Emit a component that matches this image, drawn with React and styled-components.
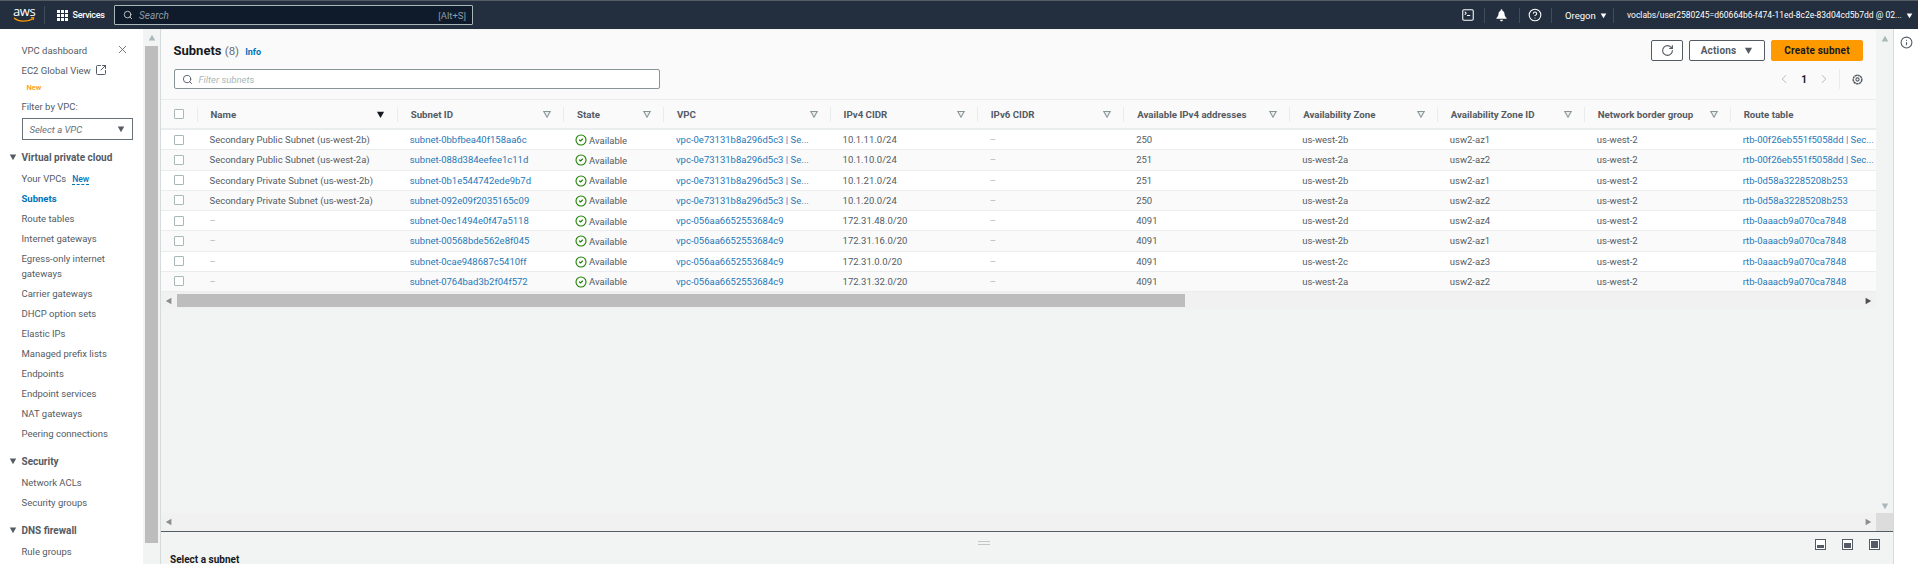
import styled, { createGlobalStyle } from "styled-components";
import {
  Search,
  X,
  SquareArrowOutUpRight,
  SquareTerminal,
  CircleHelp,
  RotateCw,
  ChevronLeft,
  ChevronRight,
  CircleCheck,
  Info,
} from "lucide-react";

const GlobalStyle = createGlobalStyle`
  html, body {
    margin: 0;
    padding: 0;
    height: 100%;
    overflow: hidden;
    background: #ffffff;
    font-family: Roboto, "Liberation Sans", sans-serif;
    font-size: 9.5px;
    color: #545b64;
  }
  #root { height: 100%; }
  * { box-sizing: border-box; }
`;

const COLUMNS = "35.5px 200.2px 166.3px 100px 166.6px 147.2px 146.4px 166px 147.6px 147px 145.9px 146.7px";
const LINK = "#1f78b8";

const subnets = [
  ["Secondary Public Subnet (us-west-2b)", "subnet-0bbfbea40f158aa6c", "vpc-0e73131b8a296d5c3 | Se...", "10.1.11.0/24", "250", "us-west-2b", "usw2-az1", "rtb-00f26eb551f5058dd | Sec..."],
  ["Secondary Public Subnet (us-west-2a)", "subnet-088d384eefee1c11d", "vpc-0e73131b8a296d5c3 | Se...", "10.1.10.0/24", "251", "us-west-2a", "usw2-az2", "rtb-00f26eb551f5058dd | Sec..."],
  ["Secondary Private Subnet (us-west-2b)", "subnet-0b1e544742ede9b7d", "vpc-0e73131b8a296d5c3 | Se...", "10.1.21.0/24", "251", "us-west-2b", "usw2-az1", "rtb-0d58a32285208b253"],
  ["Secondary Private Subnet (us-west-2a)", "subnet-092e09f2035165c09", "vpc-0e73131b8a296d5c3 | Se...", "10.1.20.0/24", "250", "us-west-2a", "usw2-az2", "rtb-0d58a32285208b253"],
  ["–", "subnet-0ec1494e0f47a5118", "vpc-056aa6652553684c9", "172.31.48.0/20", "4091", "us-west-2d", "usw2-az4", "rtb-0aaacb9a070ca7848"],
  ["–", "subnet-00568bde562e8f045", "vpc-056aa6652553684c9", "172.31.16.0/20", "4091", "us-west-2b", "usw2-az1", "rtb-0aaacb9a070ca7848"],
  ["–", "subnet-0cae948687c5410ff", "vpc-056aa6652553684c9", "172.31.0.0/20", "4091", "us-west-2c", "usw2-az3", "rtb-0aaacb9a070ca7848"],
  ["–", "subnet-0764bad3b2f04f572", "vpc-056aa6652553684c9", "172.31.32.0/20", "4091", "us-west-2a", "usw2-az2", "rtb-0aaacb9a070ca7848"],
];

const headers = [
  "Name",
  "Subnet ID",
  "State",
  "VPC",
  "IPv4 CIDR",
  "IPv6 CIDR",
  "Available IPv4 addresses",
  "Availability Zone",
  "Availability Zone ID",
  "Network border group",
  "Route table",
];

const navGroups = [
  {
    title: "Virtual private cloud",
    items: [
      "Your VPCs",
      "Subnets",
      "Route tables",
      "Internet gateways",
      "Egress-only internet gateways",
      "Carrier gateways",
      "DHCP option sets",
      "Elastic IPs",
      "Managed prefix lists",
      "Endpoints",
      "Endpoint services",
      "NAT gateways",
      "Peering connections",
    ],
  },
  { title: "Security", items: ["Network ACLs", "Security groups"] },
  { title: "DNS firewall", items: ["Rule groups"] },
];

const Triangle = ({ size = 9, dir = "down", fill = "#545b64", stroke = "none" }) => {
  const points = {
    down: "1,2 9,2 5,9",
    up: "1,8 9,8 5,1",
    left: "8,1 8,9 1,5",
    right: "2,1 2,9 9,5",
  }[dir];
  return (
    <svg width={size} height={size} viewBox="0 0 10 10">
      <polygon points={points} fill={fill} stroke={stroke} strokeWidth={stroke === "none" ? 0 : 1.3} />
    </svg>
  );
};

const GridIcon = () => (
  <svg width="11" height="11" viewBox="0 0 11 11" fill="#ffffff">
    {[0, 4, 8].map((y) =>
      [0, 4, 8].map((x) => <rect key={`${x}-${y}`} x={x} y={y} width="3" height="3" />)
    )}
  </svg>
);

const BellIcon = () => (
  <svg width="13" height="13" viewBox="0 0 12 12" fill="none">
    <path d="M6 1.6c-1.900 0-2.800 1.400-2.800 3.100 0 1.800-.9 2.800-1.900 3.600v.7h9.400v-.7c-1-.8-1.900-1.800-1.900-3.600C8.800 3 7.900 1.600 6 1.600z" fill="#ffffff" />
    <circle cx="6" cy="1.200" r=".9" fill="#ffffff" />
    <path d="M4.600 10h2.800c0 .8-.6 1.400-1.400 1.400S4.600 10.800 4.600 10z" fill="#ffffff" />
  </svg>
);

const GearIcon = () => (
  <svg width="11" height="11" viewBox="0 0 11 11" fill="none">
    <circle cx="5.5" cy="5.5" r="4.3" stroke="#545b64" strokeWidth="1.500" strokeDasharray="2.400 .4" />
    <circle cx="5.5" cy="5.5" r="1.600" stroke="#545b64" strokeWidth="1.100" />
  </svg>
);

const PanelIcon = ({ mode }) => (
  <svg width="11" height="11" viewBox="0 0 11 11">
    <rect x=".5" y=".5" width="10" height="10" fill="#ffffff" stroke="#545b64" />
    {mode === "low" && <rect x="2" y="6" width="7" height="3" fill="#545b64" />}
    {mode === "mid" && <rect x="2" y="4" width="7" height="5" fill="#545b64" />}
    {mode === "high" && <rect x="2" y="2" width="7" height="7" fill="#545b64" />}
  </svg>
);

const Page = styled.div`
  height: 564px;
  display: flex;
  flex-direction: column;
  overflow: hidden;
`;

const TopBar = styled.header`
  height: 29px;
  flex: none;
  display: flex;
  align-items: center;
  background: #232f3e;
  border-top: 1px solid #545b64;
  color: #ffffff;
`;

const Logo = styled.div`
  width: 44.5px;
  height: 18px;
  padding-left: 13px;
  border-right: 1px solid #414b5a;
  display: flex;
  flex-direction: column;
  align-items: flex-start;
`;

const LogoText = styled.span`
  font-family: "Open Sans", sans-serif;
  font-size: 13px;
  line-height: 11px;
  height: 11px;
  letter-spacing: -0.4px;
`;

const ServicesMenu = styled.div`
  display: flex;
  align-items: center;
  gap: 5px;
  margin-left: 12px;
  width: 57.5px;
  font-size: 9px;
  font-weight: 500;
  letter-spacing: -0.3px;
`;

const SearchBox = styled.div`
  width: 359px;
  height: 20px;
  display: flex;
  align-items: center;
  padding: 0 6px 0 8px;
  background: #0f1b2a;
  border: 1px solid #aab7b8;
  border-radius: 1px;
  color: #8b9ba8;
`;

const SearchText = styled.span`
  flex: 1;
  margin-left: 6px;
  font-style: italic;
  font-size: 10px;
`;

const TopRight = styled.div`
  margin-left: auto;
  display: flex;
  align-items: center;
`;

const TopSlot = styled.div`
  width: ${(p) => p.$w}px;
  height: 15px;
  display: flex;
  align-items: center;
  justify-content: ${(p) => (p.$text ? "flex-start" : "center")};
  gap: 4px;
  padding-left: ${(p) => (p.$text ? 13 : 0)}px;
  border-right: ${(p) => (p.$last ? "none" : "1px solid #414b5a")};
  font-size: ${(p) => p.$size || 9.5}px;
  white-space: nowrap;
`;

const Body = styled.div`
  flex: 1;
  display: flex;
  min-height: 0;
`;

const Sidebar = styled.nav`
  width: 143px;
  flex: none;
  padding: 11px 0 0 21.5px;
  background: #ffffff;
  overflow: hidden;
  position: relative;
`;

const CloseButton = styled.span`
  position: absolute;
  top: 14px;
  left: 116px;
  display: flex;
  color: #545b64;
`;

const NavItem = styled.div`
  width: 96px;
  min-height: 20px;
  display: flex;
  align-items: center;
  gap: 4px;
  line-height: 15px;
  padding: 2.5px 0;
  color: ${(p) => (p.$active ? "#0073bb" : "#545b64")};
  font-weight: ${(p) => (p.$active ? 700 : 400)};
`;

const NewLabel = styled.div`
  font-size: 7.5px;
  font-weight: 500;
  color: #ff9900;
  margin: 0 0 0 5px;
  height: 15px;
  line-height: 15px;
`;

const NewLink = styled.span`
  display: inline-block;
  font-size: 8.5px;
  font-weight: 500;
  color: #0073bb;
  margin-left: 6px;
  border-bottom: 1px dashed #0073bb;
  line-height: 10px;
`;

const FilterLabel = styled.div`
  line-height: 16px;
  margin-top: 4px;
`;

const VpcSelect = styled.div`
  width: 111px;
  height: 22px;
  margin-top: 3px;
  padding: 0 7px;
  display: flex;
  align-items: center;
  justify-content: space-between;
  border: 1px solid #687078;
  font-style: italic;
  color: #687078;
`;

const NavTitle = styled.div`
  display: flex;
  align-items: center;
  gap: 5px;
  height: 20px;
  margin: ${(p) => p.$top}px 0 1px -13px;
  font-weight: 700;
  font-size: 10px;
  color: #545b64;
  white-space: nowrap;
`;

const SideGutter = styled.div`
  width: 17px;
  flex: none;
  padding: 5px 2px 0;
  background: #f2f3f3;
  display: flex;
  flex-direction: column;
  align-items: center;
`;

const Thumb = styled.div`
  width: 13px;
  height: 497px;
  margin-top: 4px;
  background: #bdbdbd;
`;

const Main = styled.main`
  flex: 1;
  min-width: 0;
  display: flex;
  flex-direction: column;
  border-left: 1px solid #d5dbdb;
`;

const Upper = styled.div`
  flex: 1;
  min-height: 0;
  display: flex;
`;

const Content = styled.section`
  width: 1715px;
  flex: none;
  display: flex;
  flex-direction: column;
  padding-top: 1px;
  background: #f2f3f3;
`;

const RightGutter = styled.div`
  flex: 1;
  display: flex;
  flex-direction: column;
  align-items: center;
  background: #f2f3f3;
`;

const GutterArrow = styled.div`
  display: flex;
  padding-top: ${(p) => p.$pad || 0}px;
  margin-top: ${(p) => (p.$auto ? "auto" : 0)};
  margin-bottom: 3px;
`;

const Corner = styled.div`
  width: 100%;
  height: 18px;
  background: #dcdcdc;
`;

const Card = styled.div`
  height: 70px;
  flex: none;
  padding: 10px 13px 0 12.5px;
  background: #fafafa;
  border-bottom: 1px solid #eaeded;
`;

const TitleRow = styled.div`
  display: flex;
  align-items: center;
  justify-content: space-between;
  height: 21px;
`;

const TitleGroup = styled.div`
  display: flex;
  align-items: baseline;
  gap: 6px;
`;

const Title = styled.h1`
  margin: 0;
  font-size: 13px;
  font-weight: 700;
  color: #16191f;
  span {
    font-size: 11.5px;
    font-weight: 400;
    color: #687078;
  }
`;

const InfoLink = styled.a`
  font-size: 9px;
  font-weight: 700;
  color: #0073bb;
`;

const Actions = styled.div`
  display: flex;
  gap: 6px;
`;

const Button = styled.button`
  height: 21px;
  width: ${(p) => p.$w}px;
  padding: 0;
  display: flex;
  align-items: center;
  justify-content: center;
  gap: 8px;
  font-family: inherit;
  font-size: 10px;
  font-weight: 700;
  letter-spacing: 0.2px;
  color: ${(p) => (p.$primary ? "#16191f" : "#545b64")};
  background: ${(p) => (p.$primary ? "#ff9900" : "#ffffff")};
  border: 1px solid ${(p) => (p.$primary ? "#ff9900" : "#545b64")};
  border-radius: 2px;
`;

const FilterRow = styled.div`
  display: flex;
  align-items: center;
  justify-content: space-between;
  margin-top: 8px;
  height: 20px;
`;

const FilterBox = styled.div`
  width: 486px;
  height: 20px;
  display: flex;
  align-items: center;
  gap: 6px;
  padding-left: 7px;
  background: #ffffff;
  border: 1px solid #879596;
  border-radius: 2px;
  font-style: italic;
  color: #aab7b8;
`;

const Pager = styled.div`
  display: flex;
  align-items: center;
  height: 20px;
  color: #aab7b8;
`;

const PageNumber = styled.span`
  width: 26px;
  text-align: center;
  font-size: 10px;
  font-weight: 700;
  color: #16191f;
`;

const PagerGear = styled.div`
  display: flex;
  margin-left: 8px;
  padding-left: 12px;
  height: 20px;
  align-items: center;
  border-left: 1px solid #eaeded;
`;

const HeadRow = styled.div`
  display: grid;
  grid-template-columns: ${COLUMNS};
  height: 30px;
  flex: none;
  background: #fafafa;
  border-bottom: 2px solid #eaeded;
`;

const DataRow = styled.div`
  display: grid;
  grid-template-columns: ${COLUMNS};
  height: 20.25px;
  flex: none;
  background: ${(p) => (p.$alt ? "#fafafa" : "#ffffff")};
  border-bottom: 1px solid #eaeded;
`;

const Check = styled.div`
  width: 10px;
  height: 10px;
  background: #ffffff;
  border: 1px solid #aab7b8;
  border-radius: 1px;
`;

const CheckCell = styled.div`
  display: flex;
  align-items: center;
  padding-left: 13px;
`;

const HeadCell = styled.div`
  display: flex;
  align-items: center;
  min-width: 0;
`;

const HeadInner = styled.div`
  flex: 1;
  height: 15px;
  padding: 0 12px 0 13px;
  display: flex;
  align-items: center;
  justify-content: space-between;
  border-left: 1px solid #eaeded;
  font-size: 9.7px;
  font-weight: 700;
  color: #545b64;
  white-space: nowrap;
`;

const Cell = styled.div`
  display: flex;
  align-items: center;
  gap: 2px;
  min-width: 0;
  padding-left: 13px;
  white-space: nowrap;
  overflow: hidden;
  color: ${(p) => (p.$link ? LINK : p.$muted ? "#aab7b8" : "#545b64")};
`;

const StateCell = styled(Cell)`
  padding-left: 12px;
  padding-top: 1px;
  gap: 2px;
`;

const StatusIcon = styled.span`
  display: flex;
  color: #1d8102;
`;

const HScroll = styled.div`
  height: ${(p) => p.$h}px;
  flex: none;
  display: flex;
  align-items: center;
  justify-content: space-between;
  padding: 0 4px;
  margin-top: ${(p) => (p.$auto ? "auto" : 0)};
  background: #f1f1f1;
  position: relative;
`;

const HThumb = styled.div`
  position: absolute;
  left: 16px;
  top: 2px;
  width: 1008px;
  height: 13px;
  background: #bdbdbd;
`;

const Lower = styled.div`
  height: 33px;
  flex: none;
  position: relative;
  padding: 22px 0 0 9px;
  background: #f2f3f3;
  border-top: 1px solid #545b64;
  overflow: hidden;
`;

const Handle = styled.div`
  position: absolute;
  left: 817px;
  top: 9px;
  width: 12px;
  height: 4px;
  border-top: 1px solid #c4c7c9;
  border-bottom: 1px solid #c4c7c9;
`;

const PanelTools = styled.div`
  position: absolute;
  top: 7px;
  right: 13px;
  display: flex;
  gap: 16px;
`;

const SelectText = styled.div`
  font-size: 10px;
  font-weight: 700;
  color: #16191f;
`;

const Rail = styled.aside`
  width: 25px;
  flex: none;
  display: flex;
  justify-content: center;
  padding-top: 7px;
  background: #ffffff;
  border-left: 1px solid #d5dbdb;
  color: #545b64;
`;

export default function App() {
  return (
    <Page>
      <GlobalStyle />
      <TopBar>
        <Logo>
          <LogoText>aws</LogoText>
          <svg width="22" height="6" viewBox="0 0 22 6" fill="none">
            <path d="M1 1c5 4 13 4.300 19 .6" stroke="#ff9900" strokeWidth="1.300" />
            <path d="M18 .6l3-.3-.8 2.800" stroke="#ff9900" strokeWidth="1" />
          </svg>
        </Logo>
        <ServicesMenu>
          <GridIcon />
          Services
        </ServicesMenu>
        <SearchBox>
          <Search size={10} color="#d5dbdb" strokeWidth={2} />
          <SearchText>Search</SearchText>
          <span>[Alt+S]</span>
        </SearchBox>
        <TopRight>
          <TopSlot $w={33}>
            <SquareTerminal size={14} strokeWidth={1.8} />
          </TopSlot>
          <TopSlot $w={35}>
            <BellIcon />
          </TopSlot>
          <TopSlot $w={32.5}>
            <CircleHelp size={14} strokeWidth={1.8} />
          </TopSlot>
          <TopSlot $w={62} $text>
            Oregon
            <Triangle size={7} fill="#ffffff" />
          </TopSlot>
          <TopSlot $w={304} $size={8.5} $text $last>
            voclabs/user2580245=d60664b6-f474-11ed-8c2e-83d04cd5b7dd @ 02...
            <Triangle size={7} fill="#ffffff" />
          </TopSlot>
        </TopRight>
      </TopBar>
      <Body>
        <Sidebar>
          <CloseButton>
            <X size={13} strokeWidth={1.5} />
          </CloseButton>
          <NavItem>VPC dashboard</NavItem>
          <NavItem>
            EC2 Global View
            <SquareArrowOutUpRight size={12} strokeWidth={2} />
          </NavItem>
          <NewLabel>New</NewLabel>
          <FilterLabel>Filter by VPC:</FilterLabel>
          <VpcSelect>
            Select a VPC
            <Triangle size={8} />
          </VpcSelect>
          {navGroups.map((group, i) => (
            <div key={group.title}>
              <NavTitle $top={i === 0 ? 7 : 8}>
                <Triangle size={8} />
                {group.title}
              </NavTitle>
              {group.items.map((item) => (
                <NavItem key={item} $active={item === "Subnets"}>
                  <span>
                    {item}
                    {item === "Your VPCs" && <NewLink>New</NewLink>}
                  </span>
                </NavItem>
              ))}
            </div>
          ))}
        </Sidebar>
        <SideGutter>
          <Triangle size={8} dir="up" fill="#aab7b8" />
          <Thumb />
        </SideGutter>
        <Main>
          <Upper>
            <Content>
              <Card>
                <TitleRow>
                  <TitleGroup>
                    <Title>
                      Subnets <span>(8)</span>
                    </Title>
                    <InfoLink>Info</InfoLink>
                  </TitleGroup>
                  <Actions>
                    <Button $w={32}>
                      <RotateCw size={13} strokeWidth={2} />
                    </Button>
                    <Button $w={76}>
                      Actions
                      <Triangle size={9} />
                    </Button>
                    <Button $w={92} $primary>
                      Create subnet
                    </Button>
                  </Actions>
                </TitleRow>
                <FilterRow>
                  <FilterBox>
                    <Search size={11} color="#545b64" strokeWidth={2} />
                    Filter subnets
                  </FilterBox>
                  <Pager>
                    <ChevronLeft size={14} strokeWidth={1.6} />
                    <PageNumber>1</PageNumber>
                    <ChevronRight size={14} strokeWidth={1.6} />
                    <PagerGear>
                      <GearIcon />
                    </PagerGear>
                  </Pager>
                </FilterRow>
              </Card>
              <HeadRow>
                <CheckCell>
                  <Check />
                </CheckCell>
                {headers.map((h, i) => (
                  <HeadCell key={h}>
                    <HeadInner>
                      {h}
                      {i === 0 && <Triangle size={9} fill="#16191f" />}
                      {i > 0 && i < 10 && (
                        <Triangle size={8} fill="#eaeded" stroke="#879596" />
                      )}
                    </HeadInner>
                  </HeadCell>
                ))}
              </HeadRow>
              {subnets.map((row, i) => (
                <DataRow key={row[1]} $alt={i % 2 === 1}>
                  <CheckCell>
                    <Check />
                  </CheckCell>
                  <Cell $muted={row[0] === "–"}>{row[0]}</Cell>
                  <Cell $link>{row[1]}</Cell>
                  <StateCell>
                    <StatusIcon>
                      <CircleCheck size={12} strokeWidth={2.2} />
                    </StatusIcon>
                    Available
                  </StateCell>
                  <Cell $link>{row[2]}</Cell>
                  <Cell>{row[3]}</Cell>
                  <Cell $muted>–</Cell>
                  <Cell>{row[4]}</Cell>
                  <Cell>{row[5]}</Cell>
                  <Cell>{row[6]}</Cell>
                  <Cell>us-west-2</Cell>
                  <Cell $link>{row[7]}</Cell>
                </DataRow>
              ))}
              <HScroll $h={17}>
                <Triangle size={8} dir="left" fill="#8d8d8d" />
                <HThumb />
                <Triangle size={8} dir="right" fill="#505050" />
              </HScroll>
              <HScroll $h={18} $auto>
                <Triangle size={8} dir="left" fill="#8d8d8d" />
                <Triangle size={8} dir="right" fill="#8d8d8d" />
              </HScroll>
            </Content>
            <RightGutter>
              <GutterArrow $pad={6}>
                <Triangle size={8} dir="up" fill="#aab7b8" />
              </GutterArrow>
              <GutterArrow $auto>
                <Triangle size={8} fill="#aab7b8" />
              </GutterArrow>
              <Corner />
            </RightGutter>
          </Upper>
          <Lower>
            <Handle />
            <PanelTools>
              <PanelIcon mode="low" />
              <PanelIcon mode="mid" />
              <PanelIcon mode="high" />
            </PanelTools>
            <SelectText>Select a subnet</SelectText>
          </Lower>
        </Main>
        <Rail>
          <Info size={13} strokeWidth={2} />
        </Rail>
      </Body>
    </Page>
  );
}
